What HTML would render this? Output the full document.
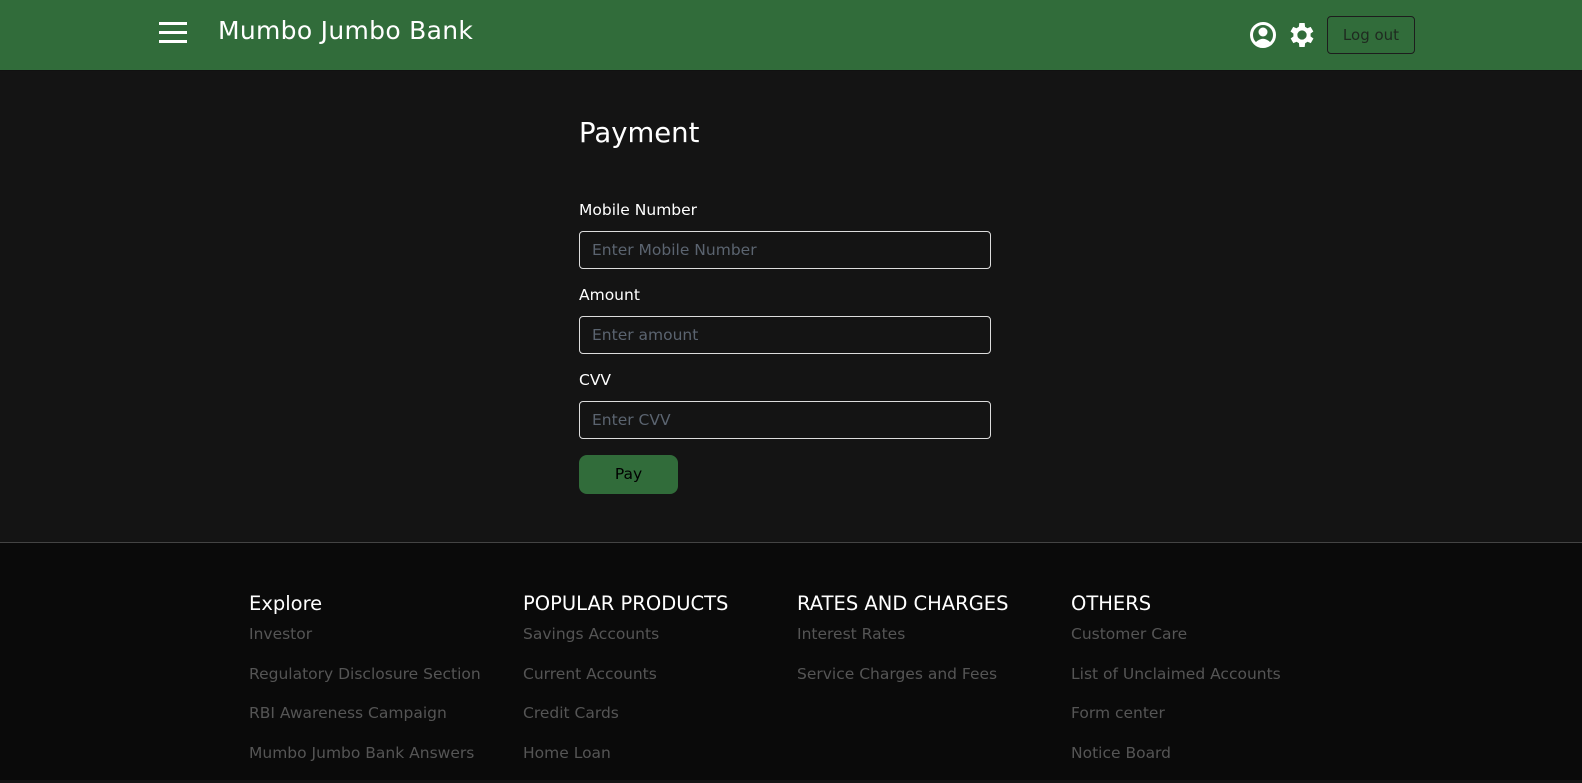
<!DOCTYPE html>
<html><head><meta charset="utf-8"><style>
*{box-sizing:border-box;margin:0;padding:0}
body{width:1582px;height:780px;overflow:hidden;background:#141414;font-family:"DejaVu Sans","Liberation Sans",sans-serif;color:#fff}
.hdr{position:absolute;left:0;top:0;width:1582px;height:71px;background:#316c3a;border-bottom:1px solid #111}
.ham{position:absolute;left:159px;top:22px;width:28px}
.ham div{height:3px;background:#fff;margin-bottom:6px}
.title{position:absolute;left:218px;top:16px;font-size:25px;letter-spacing:0.3px}
.lo{position:absolute;left:1327px;top:16px;width:88px;height:38px;border:1px solid #1d1d1d;border-radius:4px;color:#1f2a20;font-size:15px;line-height:36px;text-align:center}
h1{position:absolute;left:579px;top:117px;font-size:27.5px;font-weight:normal}
.lbl{position:absolute;left:579px;font-size:15.5px}
.inp{position:absolute;left:579px;width:412px;height:38px;border:1px solid #ddd;border-radius:4px;color:#5b6470;font-size:15.5px;line-height:36px;padding-left:12px}
.pay{position:absolute;left:579px;top:455px;width:99px;height:39px;border-radius:8px;background:#316c3a;color:#000;font-size:15.5px;line-height:39px;text-align:center}
.ft{position:absolute;left:0;top:542px;width:1582px;height:238px;background:#0a0a0a;border-top:1px solid #444}
.col{position:absolute;top:49px}
.col h3{font-weight:normal;font-size:19.5px;color:#fff;height:33px;white-space:nowrap}
.col p{font-size:15.5px;color:#555;height:39.5px;white-space:nowrap}
</style></head><body>
<div class="hdr">
<div class="ham"><div></div><div></div><div></div></div>
<div class="title">Mumbo Jumbo Bank</div>
<svg style="position:absolute;left:1249px;top:21px" width="28" height="28" viewBox="0 0 28 28"><circle cx="14" cy="14" r="11.5" fill="none" stroke="#fff" stroke-width="3"/><circle cx="14" cy="11" r="4.5" fill="#fff"/><path d="M6.5 21.5 Q14 14 21.5 21.5 Q14 27 6.5 21.5Z" fill="#fff"/></svg>
<svg style="position:absolute;left:1286px;top:19px" width="32" height="32" viewBox="0 0 24 24"><path fill="#fff" d="M19.4 13a7.5 7.5 0 000-2l2.1-1.6-2-3.5-2.5 1a7.6 7.6 0 00-1.7-1L15 3h-4l-.4 2.9a7.6 7.6 0 00-1.7 1l-2.5-1-2 3.5L6.6 11a7.5 7.5 0 000 2l-2.1 1.6 2 3.5 2.5-1a7.6 7.6 0 001.7 1L11 21h4l.4-2.9a7.6 7.6 0 001.7-1l2.5 1 2-3.5zM13 15.5a3.5 3.5 0 110-7 3.5 3.5 0 010 7z" transform="translate(-1 0)"/></svg>
<div class="lo">Log out</div>
</div>
<h1>Payment</h1>
<div class="lbl" style="top:201px">Mobile Number</div>
<div class="inp" style="top:231px">Enter Mobile Number</div>
<div class="lbl" style="top:286px">Amount</div>
<div class="inp" style="top:316px">Enter amount</div>
<div class="lbl" style="top:371px">CVV</div>
<div class="inp" style="top:401px">Enter CVV</div>
<div class="pay">Pay</div>
<div class="ft">
<div class="col" style="left:249px"><h3>Explore</h3><p>Investor</p><p>Regulatory Disclosure Section</p><p>RBI Awareness Campaign</p><p>Mumbo Jumbo Bank Answers</p></div>
<div class="col" style="left:523px"><h3>POPULAR PRODUCTS</h3><p>Savings Accounts</p><p>Current Accounts</p><p>Credit Cards</p><p>Home Loan</p></div>
<div class="col" style="left:797px"><h3>RATES AND CHARGES</h3><p>Interest Rates</p><p>Service Charges and Fees</p></div>
<div class="col" style="left:1071px"><h3>OTHERS</h3><p>Customer Care</p><p>List of Unclaimed Accounts</p><p>Form center</p><p>Notice Board</p></div>
</div>
</body></html>
